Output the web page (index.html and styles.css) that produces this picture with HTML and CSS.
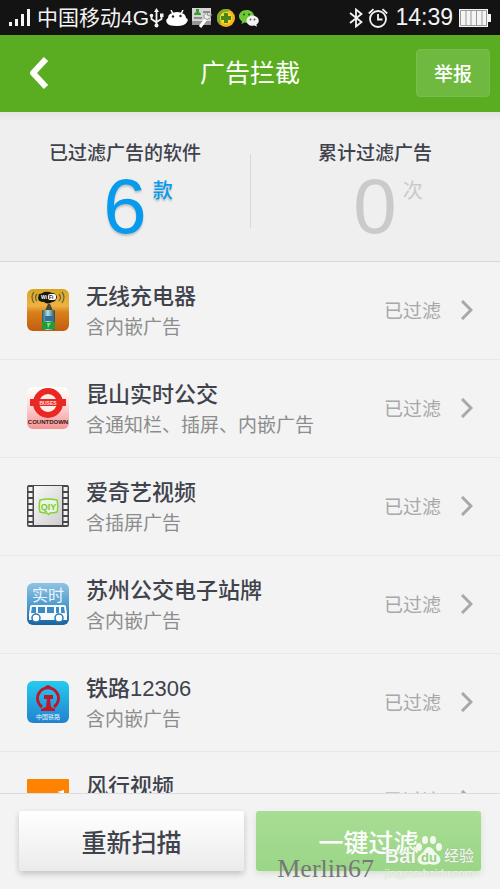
FILE: index.html
```html
<!DOCTYPE html>
<html lang="zh-CN">
<head>
    <meta charset="UTF-8">
    <meta name="viewport" content="width=device-width, initial-scale=1.0">
    <title>广告拦截</title>
    <link rel="stylesheet" href="styles.css">
</head>
<body>
    <!-- Status bar -->
    <div class="status-bar">
        <div class="status-left">
            <svg class="signal" width="22" height="18" viewBox="0 0 22 18" fill="#f4f4f4">
                <rect x="0" y="13" width="3" height="4"/>
                <rect x="6" y="10" width="3" height="7"/>
                <rect x="12" y="5" width="3" height="12"/>
                <rect x="18" y="0" width="3" height="17"/>
            </svg>
            <span class="carrier">中国移动4G</span>
            <svg class="usb" width="15" height="20" viewBox="0 0 15 20" fill="none" stroke="#f4f4f4" stroke-width="1.8">
                <path d="M7.5 3v13M2.5 8v3l5 3.5M12.5 7v4l-5 3"/>
                <path d="M7.5 0l2.5 4H5z" fill="#f4f4f4" stroke="none"/>
                <circle cx="7.5" cy="17.5" r="2" fill="#f4f4f4" stroke="none"/>
                <circle cx="2.5" cy="7.5" r="1.8" fill="#f4f4f4" stroke="none"/>
                <rect x="11" y="5.5" width="3.5" height="3.5" fill="#f4f4f4" stroke="none"/>
            </svg>
            <svg class="tray-icon" width="22" height="16" viewBox="0 0 22 16">
                <path d="M5 0l2 4M17 0l-2 4" stroke="#fff" stroke-width="1.5"/>
                <path d="M4 4Q11 0 18 4Q20 6 20 8Q23 9 21 12Q19 16 11 16Q2 16 1 13Q-1 10 2 8Q2 5 4 4z" fill="#fff"/>
                <circle cx="7" cy="6.500" r="1.200" fill="#222"/>
                <circle cx="14.500" cy="6" r="1.200" fill="#222"/>
            </svg>
            <svg class="tray-icon" width="21" height="20" viewBox="0 0 21 20">
                <rect x="0" y="0" width="19" height="17" fill="#d4d6d3"/>
                <rect x="0" y="13" width="19" height="4" fill="#969696"/>
                <path d="M4 1h3v3H4zM2 7q0-3 3.500-3T9 7z" fill="#3d9a35"/>
                <path d="M11 4h7M2 10h8" stroke="#777" stroke-width="1.500"/>
                <path d="M8 19l6-8" stroke="#fff" stroke-width="3"/>
                <path d="M14 5q-3 2-2 5q3 3 6 0l2-4-3 2-2-1 1-3z" fill="#eee" stroke="#777" stroke-width=".7"/>
            </svg>
            <svg class="tray-icon" width="18" height="18" viewBox="0 0 18 18">
                <circle cx="9" cy="9" r="9" fill="#f2b51c"/>
                <path d="M0 10A9 9 0 0 1 14 1.500Q8 2 5 7Q3 11 3.500 16Q0 14 0 10z" fill="#7ab02b"/>
                <circle cx="9" cy="9" r="6" fill="#ffd52d"/>
                <path d="M7 4h4v3h3v4h-3v3H7v-3H4V7h3z" fill="#4c8418"/>
            </svg>
            <svg class="tray-icon" width="20" height="18" viewBox="0 0 20 18">
                <path d="M7.500 1C3 1 0 4 0 7.200c0 2 1 3.800 3 5L2.500 15l3-1.600 2 .3c4.500 0 7.500-3 7.500-6.500S12 1 7.500 1z" fill="#6fc838"/>
                <circle cx="5" cy="5.500" r="1" fill="#23501a"/>
                <circle cx="10" cy="5.500" r="1" fill="#23501a"/>
                <path d="M13.500 6.500c-3.500 0-6 2.300-6 5.200s2.500 5 6 5l2-.2 2.500 1.300-.6-2.300c1.600-1 2.400-2.300 2.400-3.800 0-2.900-2.800-5.200-6.300-5.200z" fill="#f2f2f2"/>
                <circle cx="11.500" cy="10.500" r=".9" fill="#555"/>
                <circle cx="15.500" cy="10.500" r=".9" fill="#555"/>
            </svg>
        </div>
        <div class="status-right">
            <svg width="14" height="20" viewBox="0 0 14 20" fill="none" stroke="#f4f4f4" stroke-width="1.8">
                <path d="M1 5l11.500 9L7 18.500v-17L12.500 6 1 15"/>
            </svg>
            <svg class="alarm" width="20" height="20" viewBox="0 0 20 20" fill="none" stroke="#f4f4f4" stroke-width="1.8">
                <circle cx="10" cy="11" r="8"/>
                <path d="M10 6v5.500h4.500M.8 5.500L5.500 1.200M19.200 5.500l-4.700-4.300"/>
            </svg>
            <span class="clock">14:39</span>
            <svg width="32" height="18" viewBox="0 0 32 18">
                <rect x="0" y="0" width="29" height="18" fill="#f4f4f4"/>
                <rect x="29" y="5" width="3" height="8" fill="#f4f4f4"/>
                <path d="M1.500 1.500h26v15h-26zM7 1v16M12 1v16M17.500 1v16M23 1v16" fill="none" stroke="#999" stroke-width="1"/>
            </svg>
        </div>
    </div>

    <!-- Title bar -->
    <header class="header">
        <button class="back-btn" type="button" aria-label="返回">
            <svg width="22" height="34" viewBox="0 0 22 34" fill="none" stroke="#fff" stroke-width="6" stroke-linejoin="round">
                <path d="M18 3L5 17l13 14"/>
            </svg>
        </button>
        <h1>广告拦截</h1>
        <button class="report-btn" type="button">举报</button>
    </header>

    <!-- Totals -->
    <section class="stats">
        <div class="stat">
            <h2>已过滤广告的软件</h2>
            <div class="stat-value stat-active"><span class="number">6</span><span class="unit">款</span></div>
        </div>
        <div class="stat">
            <h2>累计过滤广告</h2>
            <div class="stat-value"><span class="number">0</span><span class="unit">次</span></div>
        </div>
    </section>

    <!-- App list -->
    <main class="app-list">
        <a class="app-row" href="#">
            <svg class="app-icon" viewBox="0 0 42 42">
                <defs>
                    <linearGradient id="charger" x1="0" y1="0" x2="0" y2="1">
                        <stop offset="0" stop-color="#d9a51f"/>
                        <stop offset=".4" stop-color="#edb341"/>
                        <stop offset=".55" stop-color="#d9801b"/>
                        <stop offset="1" stop-color="#c05d10"/>
                    </linearGradient>
                    <linearGradient id="battery" x1="0" y1="0" x2="1" y2="0">
                        <stop offset="0" stop-color="#275a58"/>
                        <stop offset=".45" stop-color="#b5e0e8"/>
                        <stop offset="1" stop-color="#214d55"/>
                    </linearGradient>
                </defs>
                <rect width="42" height="42" rx="6" fill="url(#charger)"/>
                <path d="M7 3q-4 5 0 11M10 5q-3 4 0 7M35 3q4 5 0 11M32 5q3 4 0 7" fill="none" stroke="#6d6438" stroke-width="1.3"/>
                <path d="M12 5q3 0 5-2 4-1 8 1 4 0 5 4-1 5-5 5-4 3-8 0-6 0-6-4z" fill="#171710"/>
                <rect x="21" y="5" width="8" height="6" rx="2" fill="#fff"/>
                <text x="14" y="10" class="tiny-text" fill="#fff">Wi</text>
                <text x="22" y="10" class="tiny-text" fill="#111">Fi</text>
                <path d="M18 22l2-5 1-2h2l1 2 2 5z" fill="#4e4536"/>
                <rect x="15" y="21" width="13" height="20" rx="1" fill="url(#battery)"/>
                <rect x="18" y="27" width="8" height="5" fill="#306fa0"/>
                <rect x="15" y="33" width="13" height="7" fill="#219d35"/>
                <path d="M20 34h4l-3 5z" fill="#7ee07a"/>
            </svg>
            <div class="app-info">
                <div class="app-name">无线充电器</div>
                <div class="app-desc">含内嵌广告</div>
            </div>
            <span class="app-state">已过滤</span>
            <svg class="chevron" viewBox="0 0 12 20"><path d="M1 1l9 9-9 9"/></svg>
        </a>
        <a class="app-row" href="#">
            <svg class="app-icon" viewBox="0 0 42 42">
                <defs>
                    <linearGradient id="buses" x1="0" y1="0" x2="0" y2="1">
                        <stop offset="0" stop-color="#fff"/>
                        <stop offset=".3" stop-color="#fdeaea"/>
                        <stop offset="1" stop-color="#f59393"/>
                    </linearGradient>
                </defs>
                <rect width="42" height="42" rx="6" fill="url(#buses)"/>
                <circle cx="21" cy="16" r="12" fill="#fbecec" stroke="#ea2822" stroke-width="6"/>
                <rect x="3" y="12" width="36" height="7" fill="#ea2822"/>
                <text x="21" y="18" class="bus-text" fill="#ffe2dc">BUSES</text>
                <text x="21" y="37" class="countdown-text" fill="#3a1518">COUNTDOWN</text>
            </svg>
            <div class="app-info">
                <div class="app-name">昆山实时公交</div>
                <div class="app-desc">含通知栏、插屏、内嵌广告</div>
            </div>
            <span class="app-state">已过滤</span>
            <svg class="chevron" viewBox="0 0 12 20"><path d="M1 1l9 9-9 9"/></svg>
        </a>
        <a class="app-row" href="#">
            <svg class="app-icon" viewBox="0 0 42 42">
                <defs>
                    <linearGradient id="film" x1="0" y1="0" x2="1" y2="1">
                        <stop offset="0" stop-color="#f8f8f8"/>
                        <stop offset="1" stop-color="#cfcfcf"/>
                    </linearGradient>
                </defs>
                <rect width="42" height="42" rx="2" fill="#48484a"/>
                <rect x="7" y="1" width="28" height="39" fill="url(#film)"/>
                <path d="M3.500 2v38M38.500 2v38" stroke="#f2f2f2" stroke-width="4" stroke-dasharray="4 2"/>
                <path d="M13 15q8-2 17 0 1.500 6 0 12-3 1-7 1l-1.500 1.500-1.500-1.500q-4 0-7-1-1.500-6 0-12z" fill="#e9f5de" stroke="#86d13c" stroke-width="1.500"/>
                <text x="21.500" y="25" class="qiy-text" fill="#79c832">QIY</text>
            </svg>
            <div class="app-info">
                <div class="app-name">爱奇艺视频</div>
                <div class="app-desc">含插屏广告</div>
            </div>
            <span class="app-state">已过滤</span>
            <svg class="chevron" viewBox="0 0 12 20"><path d="M1 1l9 9-9 9"/></svg>
        </a>
        <a class="app-row" href="#">
            <svg class="app-icon" viewBox="0 0 42 42">
                <defs>
                    <linearGradient id="station" x1="0" y1="0" x2="0" y2="1">
                        <stop offset="0" stop-color="#8fc3e4"/>
                        <stop offset=".5" stop-color="#539dce"/>
                        <stop offset="1" stop-color="#1762a0"/>
                    </linearGradient>
                </defs>
                <rect width="42" height="42" rx="6" fill="url(#station)"/>
                <text x="21" y="18" class="station-text" fill="#eaf6ff">实时</text>
                <path d="M5 22h32q2 0 2 2l1 7v6H2v-6l1-7q0-2 2-2z" fill="#f6fbff"/>
                <path d="M5 24h4v6H4zM11 24h7v6h-7zM20 24h7v6h-7zM29 24h3v6h-3zM34 24h3l1 6h-4z" fill="#3d8bc1"/>
                <circle cx="9" cy="35" r="4" fill="#fff" stroke="#2b76b0" stroke-width="1.500"/>
                <circle cx="32" cy="35" r="4" fill="#fff" stroke="#2b76b0" stroke-width="1.500"/>
            </svg>
            <div class="app-info">
                <div class="app-name">苏州公交电子站牌</div>
                <div class="app-desc">含内嵌广告</div>
            </div>
            <span class="app-state">已过滤</span>
            <svg class="chevron" viewBox="0 0 12 20"><path d="M1 1l9 9-9 9"/></svg>
        </a>
        <a class="app-row" href="#">
            <svg class="app-icon" viewBox="0 0 42 42">
                <defs>
                    <linearGradient id="railway" x1="0" y1="0" x2="0" y2="1">
                        <stop offset="0" stop-color="#25cbee"/>
                        <stop offset="1" stop-color="#2182ce"/>
                    </linearGradient>
                </defs>
                <rect width="42" height="42" rx="6" fill="url(#railway)"/>
                <path d="M15 26a10.500 10.500 0 1 1 12 0" fill="none" stroke="#c0152b" stroke-width="2.800"/>
                <path d="M17 7q4-6 8 0z" fill="#c0152b"/>
                <path d="M17 14h9v4h-3l1 8 4 2v2H14v-2l5-2 1-8h-3z" fill="#c0152b"/>
                <text x="21" y="38" class="railway-text" fill="#e4f4ff">中国铁路</text>
            </svg>
            <div class="app-info">
                <div class="app-name">铁路12306</div>
                <div class="app-desc">含内嵌广告</div>
            </div>
            <span class="app-state">已过滤</span>
            <svg class="chevron" viewBox="0 0 12 20"><path d="M1 1l9 9-9 9"/></svg>
        </a>
        <a class="app-row" href="#">
            <svg class="app-icon" viewBox="0 0 42 42">
                <rect width="42" height="42" rx="1" fill="#ff8200"/>
                <path d="M30 13l7-2v10l-3-1v-6z" fill="#fff"/>
            </svg>
            <div class="app-info">
                <div class="app-name">风行视频</div>
                <div class="app-desc">含内嵌广告</div>
            </div>
            <span class="app-state">已过滤</span>
            <svg class="chevron" viewBox="0 0 12 20"><path d="M1 1l9 9-9 9"/></svg>
        </a>
    </main>

    <!-- Bottom actions -->
    <footer class="actions">
        <button class="action-btn" type="button">重新扫描</button>
        <button class="action-btn action-primary" type="button">一键过滤</button>
        <span class="signature">Merlin67</span>
        <div class="watermark">
            <div class="watermark-logo">
                <span>Bai</span>
                <svg width="26" height="30" viewBox="0 0 26 30">
                    <g fill="#f1f8ed">
                        <ellipse cx="3" cy="11" rx="3" ry="4"/>
                        <ellipse cx="9" cy="4" rx="3" ry="4"/>
                        <ellipse cx="17" cy="4" rx="3" ry="4"/>
                        <ellipse cx="23" cy="11" rx="3" ry="4"/>
                        <path d="M13 11q3 0 5 4l5 5q3 4 0 7-3 3-10 1-7 2-10-1-3-4 0-7l5-5q2-4 5-4z"/>
                    </g>
                    <text x="13" y="26" class="paw-text" fill="#94cf83">du</text>
                </svg>
                <span class="watermark-cn">经验</span>
            </div>
            <div class="watermark-url">jingyan.baidu.com</div>
        </div>
    </footer>
</body>
</html>
```
FILE: styles.css
```css
* {
    box-sizing: border-box;
}
body {
    margin: 0;
    height: 100vh;
    display: flex;
    flex-direction: column;
    overflow: hidden;
    background-color: #f3f3f3;
    color: #40424c;
    font-family: "Liberation Sans", "Noto Sans CJK SC", sans-serif;
}
button {
    font-family: inherit;
    border: none;
    padding: 0;
    cursor: pointer;
}
h1, h2 {
    margin: 0;
    font-weight: 400;
}

/* Status bar */
.status-bar {
    flex: none;
    height: 35px;
    padding: 0 9px;
    display: flex;
    align-items: center;
    justify-content: space-between;
    background-color: #131313;
    color: #f4f4f4;
}
.status-left, .status-right {
    display: flex;
    align-items: center;
}
.carrier {
    margin-left: 6px;
    font-size: 21px;
    line-height: 35px;
}
.usb {
    margin-right: 2px;
}
.tray-icon {
    margin-right: 4px;
}
.alarm {
    margin: 0 7px 0 5px;
}
.clock {
    margin-right: 6px;
    font-size: 23px;
    line-height: 35px;
}

/* Title bar */
.header {
    flex: none;
    height: 77px;
    padding: 0 10px 2px;
    display: grid;
    grid-template-columns: 74px 1fr 74px;
    align-items: center;
    background-color: #5aad20;
    color: #fff;
    text-align: center;
}
.header h1 {
    font-size: 25px;
    line-height: 36px;
}
.back-btn {
    height: 48px;
    padding-left: 18px;
    display: flex;
    align-items: center;
    background: none;
}
.report-btn {
    height: 48px;
    border: 1px solid #7abd4c;
    border-radius: 4px;
    background-color: #70b940;
    color: #fff;
    font-size: 19px;
    font-weight: 500;
}

/* Totals */
.stats {
    flex: none;
    height: 150px;
    display: grid;
    grid-template-columns: 1fr 1fr;
    border-bottom: 1px solid #d8d8d8;
    background: linear-gradient(#e4e4e4, #efefef 10px);
    text-align: center;
}
.stat {
    padding-top: 27px;
}
.stat + .stat {
    background: linear-gradient(#d8d8d8, #d8d8d8) 0 42px / 1px 74px no-repeat;
}
.stat h2 {
    font-size: 19px;
    font-weight: 500;
    line-height: 30px;
}
.stat-value {
    display: flex;
    justify-content: center;
    padding-left: 26px;
    color: #cacaca;
}
.stat-active {
    color: #069bec;
    text-shadow: 0 2px 2px rgba(0,0,0,0.2);
}
.number {
    font-size: 78px;
    line-height: 74px;
}
.unit {
    padding: 7px 0 0 6px;
    font-size: 20px;
    line-height: 30px;
}
.stat-active .unit {
    font-weight: 500;
}

/* App list */
.app-list {
    flex: 1;
    min-height: 0;
    overflow: hidden;
}
.app-row {
    height: 98px;
    padding: 0 27px 2px;
    display: flex;
    align-items: center;
    border-bottom: 1px solid #e8e8e8;
    color: inherit;
    text-decoration: none;
}
.app-icon {
    flex: none;
    width: 42px;
    height: 42px;
}
.app-info {
    flex: 1;
    margin-left: 17px;
    padding-top: 4px;
}
.app-name {
    font-size: 22px;
    font-weight: 500;
    line-height: 32px;
}
.app-desc {
    color: #8c8c8c;
    font-size: 19px;
    line-height: 30px;
}
.app-state {
    margin-right: 20px;
    color: #a8a8a8;
    font-size: 19px;
}
.chevron {
    width: 12px;
    height: 20px;
    fill: none;
    stroke: #a8a8a8;
    stroke-width: 3;
}

/* Lettering inside the app icons */
.tiny-text {
    font-size: 5px;
    font-weight: bold;
}
.bus-text {
    font-size: 5px;
    font-weight: bold;
    text-anchor: middle;
}
.countdown-text {
    font-size: 6px;
    font-weight: bold;
    text-anchor: middle;
}
.qiy-text {
    font-size: 9px;
    font-weight: bold;
    text-anchor: middle;
}
.station-text {
    font-size: 16px;
    text-anchor: middle;
}
.railway-text {
    font-size: 6px;
    text-anchor: middle;
}

/* Bottom actions */
.actions {
    position: relative;
    flex: none;
    height: 96px;
    padding: 17px 19px;
    display: flex;
    align-items: flex-start;
    gap: 12px;
    border-top: 1px solid #dcdcdc;
    background-color: #f3f3f3;
}
.action-btn {
    flex: 1;
    height: 60px;
    border-radius: 3px;
    background: linear-gradient(#fff, #ebebeb);
    box-shadow: 0 3px 6px rgba(0,0,0,0.2);
    color: #40424c;
    font-size: 25px;
    font-weight: 500;
}
.action-primary {
    background: linear-gradient(#a7dd94, #9bd687);
    box-shadow: 0 3px 6px rgba(90,160,70,0.2);
    color: #fff;
}
.signature {
    position: absolute;
    right: 126px;
    bottom: 5px;
    color: #777;
    font-family: "Liberation Serif", serif;
    font-size: 26px;
    line-height: 30px;
}
.watermark {
    position: absolute;
    right: 26px;
    bottom: 9px;
    color: #f1f8ed;
    text-shadow: 0 0 1px #8b9b85;
}
.watermark-logo {
    display: flex;
    align-items: flex-end;
    font-size: 20px;
    font-weight: bold;
    line-height: 20px;
}
.watermark-cn {
    margin-left: 2px;
    font-size: 15px;
    font-weight: 500;
}
.watermark-url {
    font-size: 11px;
    line-height: 14px;
    text-shadow: 0 0 1px #b9c4b4;
}
.paw-text {
    font-size: 13px;
    font-weight: bold;
    text-anchor: middle;
    text-shadow: none;
}
```
